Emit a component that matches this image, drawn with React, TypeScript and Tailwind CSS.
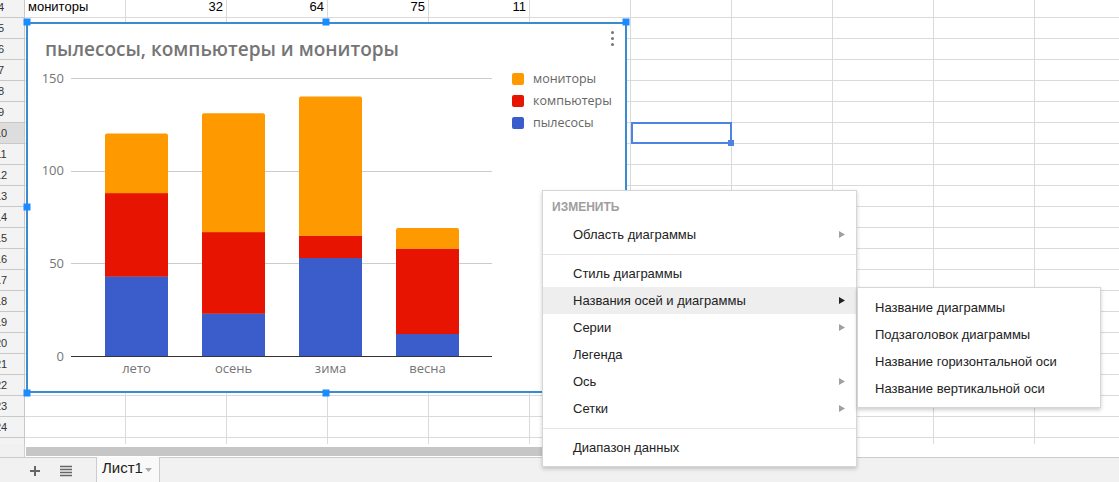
import React from "react";

const ROWS = Array.from({ length: 22 }, (_, i) => i + 4);
const COLS = 11;

const BLUE = "#3b5dcc";
const RED = "#e61400";
const ORANGE = "#ff9900";

const SEASONS = [
  { name: "лето", vals: [43, 45, 32] },
  { name: "осень", vals: [23, 44, 64] },
  { name: "зима", vals: [53, 12, 75] },
  { name: "весна", vals: [12, 46, 11] },
];

// page coords: value 0 sits at y=356, 150 at y=78
const BASE = 356;
const K = 278 / 150;
const yOf = (v: number) => BASE - v * K;

const topPath = (x: number, y: number, w: number, h: number, r: number) =>
  `M${x},${y + h} V${y + r} Q${x},${y} ${x + r},${y} H${x + w - r} Q${x + w},${y} ${x + w},${y + r} V${y + h} Z`;

const Arrow = ({ dark }: { dark?: boolean }) => (
  <svg width="6" height="7" viewBox="0 0 6 7" className="shrink-0">
    <polygon points="0,0 6,3.5 0,7" fill={dark ? "#222" : "#a0a0a0"} />
  </svg>
);

const Chart = () => {
  return (
    <div className="absolute left-[26px] top-[22px] h-[371px] w-[601px] border-2 border-[#3a8bd2] bg-white">
      <div className="absolute right-[11px] top-[7px]">
        <svg width="3" height="15" viewBox="0 0 3 15">
          <circle cx="1.5" cy="1.5" r="1.5" fill="#757575" />
          <circle cx="1.5" cy="7.5" r="1.5" fill="#757575" />
          <circle cx="1.5" cy="13.5" r="1.5" fill="#757575" />
        </svg>
      </div>
      <div className="pl-[17px] pt-[11px] text-[19px] leading-[28px] font-semibold text-[#757575] [font-family:'Open_Sans',sans-serif]">
        пылесосы, компьютеры и мониторы
      </div>
      <div className="flex">
        <svg width="472" height="328" viewBox="28 63 472 328" className="shrink-0">
          {[150, 100, 50].map((v) => (
            <line key={v} x1="71" x2="492" y1={Math.round(yOf(v)) + 0.5} y2={Math.round(yOf(v)) + 0.5} stroke="#cccccc" />
          ))}
          {[150, 100, 50, 0].map((v) => (
            <text
              key={v}
              x="64"
              y={yOf(v) + 4.5}
              textAnchor="end"
              fontSize="13"
              fill="#757575"
              fontFamily="'Open Sans', sans-serif"
            >
              {v}
            </text>
          ))}
          {SEASONS.map((s, i) => {
            const x = 105 + i * 97;
            const [b, r, o] = s.vals;
            const yb = yOf(b);
            const yr = yOf(b + r);
            const yo = yOf(b + r + o);
            return (
              <g key={s.name}>
                <rect x={x} y={yb} width="63" height={BASE - yb} fill={BLUE} />
                <rect x={x} y={yr} width="63" height={yb - yr + 0.3} fill={RED} />
                <path d={topPath(x, yo, 63, yr - yo + 0.3, 2)} fill={ORANGE} />
                <text
                  x={x + 31.5}
                  y="373"
                  textAnchor="middle"
                  fontSize="13"
                  fill="#757575"
                  fontFamily="'Open Sans', sans-serif"
                >
                  {s.name}
                </text>
              </g>
            );
          })}
          <line x1="71" x2="492" y1="356.5" y2="356.5" stroke="#333333" />
        </svg>
        <div className="ml-[12px] flex flex-col gap-[10px] pt-[10px] text-[12.5px] text-[#666] [font-family:'Open_Sans',sans-serif]">
          {[
            { c: ORANGE, t: "мониторы" },
            { c: RED, t: "компьютеры" },
            { c: BLUE, t: "пылесосы" },
          ].map((l) => (
            <div key={l.t} className="flex h-[12px] items-center gap-[9px]">
              <span className="h-[12px] w-[12px] shrink-0 rounded-[2px]" style={{ background: l.c }} />
              <span className="whitespace-nowrap">{l.t}</span>
            </div>
          ))}
        </div>
      </div>
    </div>
  );
};

const Handles = () => {
  const pts = [
    [27, 22],
    [326, 22],
    [626, 22],
    [27, 207],
    [27, 393],
    [326, 393],
  ];
  return (
    <>
      {pts.map(([x, y]) => (
        <span
          key={`${x}-${y}`}
          className="absolute h-[7px] w-[7px] -translate-x-1/2 -translate-y-1/2 bg-[#1a8cff]"
          style={{ left: x, top: y }}
        />
      ))}
    </>
  );
};

const menuItems = [
  { label: "Стиль диаграммы" },
  { label: "Названия осей и диаграммы", sub: true, active: true },
  { label: "Серии", sub: true },
  { label: "Легенда" },
  { label: "Ось", sub: true },
  { label: "Сетки", sub: true },
];

const MenuRow = ({ label, sub, active }: { label: string; sub?: boolean; active?: boolean }) => (
  <div
    className={`flex h-[27px] items-center justify-between pl-[30px] pr-[11px] leading-[27px] ${
      active ? "bg-[#eeeeee]" : ""
    }`}
  >
    <span>{label}</span>
    {sub && <Arrow dark={active} />}
  </div>
);

const Separator = () => <div className="mb-[5px] mt-[6px] h-px bg-[#e5e5e5]" />;

const ContextMenu = () => (
  <>
    <div className="absolute left-[542px] top-[190px] w-[315px] border border-[#d6d6d6] bg-white pb-[5px] pt-[6px] text-[13px] text-[#222] shadow-[0_2px_4px_rgba(0,0,0,0.2)] [font-family:'Liberation_Sans',Arial,sans-serif]">
      <div className="pb-[4px] pl-[9px] text-[12px] font-bold leading-[20px] text-[#9e9e9e]">ИЗМЕНИТЬ</div>
      <MenuRow label="Область диаграммы" sub />
      <Separator />
      {menuItems.map((m) => (
        <MenuRow key={m.label} {...m} />
      ))}
      <Separator />
      <MenuRow label="Диапазон данных" />
    </div>
    <div className="absolute left-[857px] top-[287px] w-[244px] border border-[#d6d6d6] bg-white pb-[5px] pt-[6px] text-[13px] text-[#222] shadow-[0_2px_4px_rgba(0,0,0,0.2)] [font-family:'Liberation_Sans',Arial,sans-serif]">
      {["Название диаграммы", "Подзаголовок диаграммы", "Название горизонтальной оси", "Название вертикальной оси"].map(
        (t) => (
          <div key={t} className="h-[27px] pl-[17px] leading-[27px]">
            {t}
          </div>
        )
      )}
    </div>
  </>
);

const Grid = () => (
  <div className="-mt-[3px]">
    {ROWS.map((r) => (
      <div key={r} className="flex h-[21px]">
        <div
          className={`w-[25px] shrink-0 overflow-hidden border-b border-r border-[#c8c8c8] ${
            r === 10 ? "bg-[#dddddd]" : "bg-[#f3f3f3]"
          }`}
        >
          <div className="-ml-[19px] w-[40px] text-center text-[11px] leading-[20px] text-[#333]">{r}</div>
        </div>
        {Array.from({ length: COLS }, (_, c) => (
          <div
            key={c}
            className="w-[101px] shrink-0 overflow-hidden whitespace-nowrap border-b border-r border-[#dadada] px-[3px] text-[13px] leading-[20px] text-black"
          >
            {r === 4 && c === 0 && <span>мониторы</span>}
            {r === 4 && c >= 1 && c <= 4 && <div className="text-right">{[32, 64, 75, 11][c - 1]}</div>}
          </div>
        ))}
      </div>
    ))}
  </div>
);

export default function App() {
  return (
    <div className="flex h-[482px] w-[1119px] flex-col overflow-hidden bg-white [font-family:'Liberation_Sans',Arial,sans-serif]">
      <div className="relative h-[444px] shrink-0 overflow-hidden">
        <Grid />
        <div className="absolute left-[631px] top-[122px] h-[22px] w-[101px] border-2 border-[#4d84e3]" />
        <span className="absolute left-[728px] top-[140px] h-[6px] w-[6px] bg-[#4d84e3]" />
        <Chart />
        <Handles />
      </div>
      <div className="flex h-[13px] shrink-0">
        <div className="w-[25px] shrink-0 border-r border-[#d0d0d0] bg-[#f1f1f1]" />
        <div className="flex-1 pl-[1px] pt-[3px]">
          <div className="h-[9px] w-[640px] bg-[#c6c6c6]" />
        </div>
      </div>
      <div className="flex h-[25px] shrink-0 border-t border-[#cccccc] bg-[#f1f1f1]">
        <div className="flex w-[96px] shrink-0 items-center pl-[30px] pt-[1px]">
          <svg width="10" height="10" viewBox="0 0 10 10">
            <path d="M5 0v10M0 5h10" stroke="#666" strokeWidth="2" />
          </svg>
          <svg width="12" height="12" viewBox="0 0 12 12" className="ml-[20px]">
            <path d="M0 1.5h12M0 4.5h12M0 7.5h12M0 10.5h12" stroke="#666" strokeWidth="1.4" />
          </svg>
        </div>
        <div className="-mt-px flex w-[64px] shrink-0 items-start justify-between border-x border-[#cccccc] bg-[#f9f9f9] pl-[5px] pr-[7px] pt-[1px]">
          <span className="text-[15px] leading-[20px] text-[#222]">Лист1</span>
          <svg width="7" height="4" viewBox="0 0 7 4" className="mt-[10px]">
            <polygon points="0,0 7,0 3.5,4" fill="#aaaaaa" />
          </svg>
        </div>
      </div>
      <ContextMenu />
    </div>
  );
}
